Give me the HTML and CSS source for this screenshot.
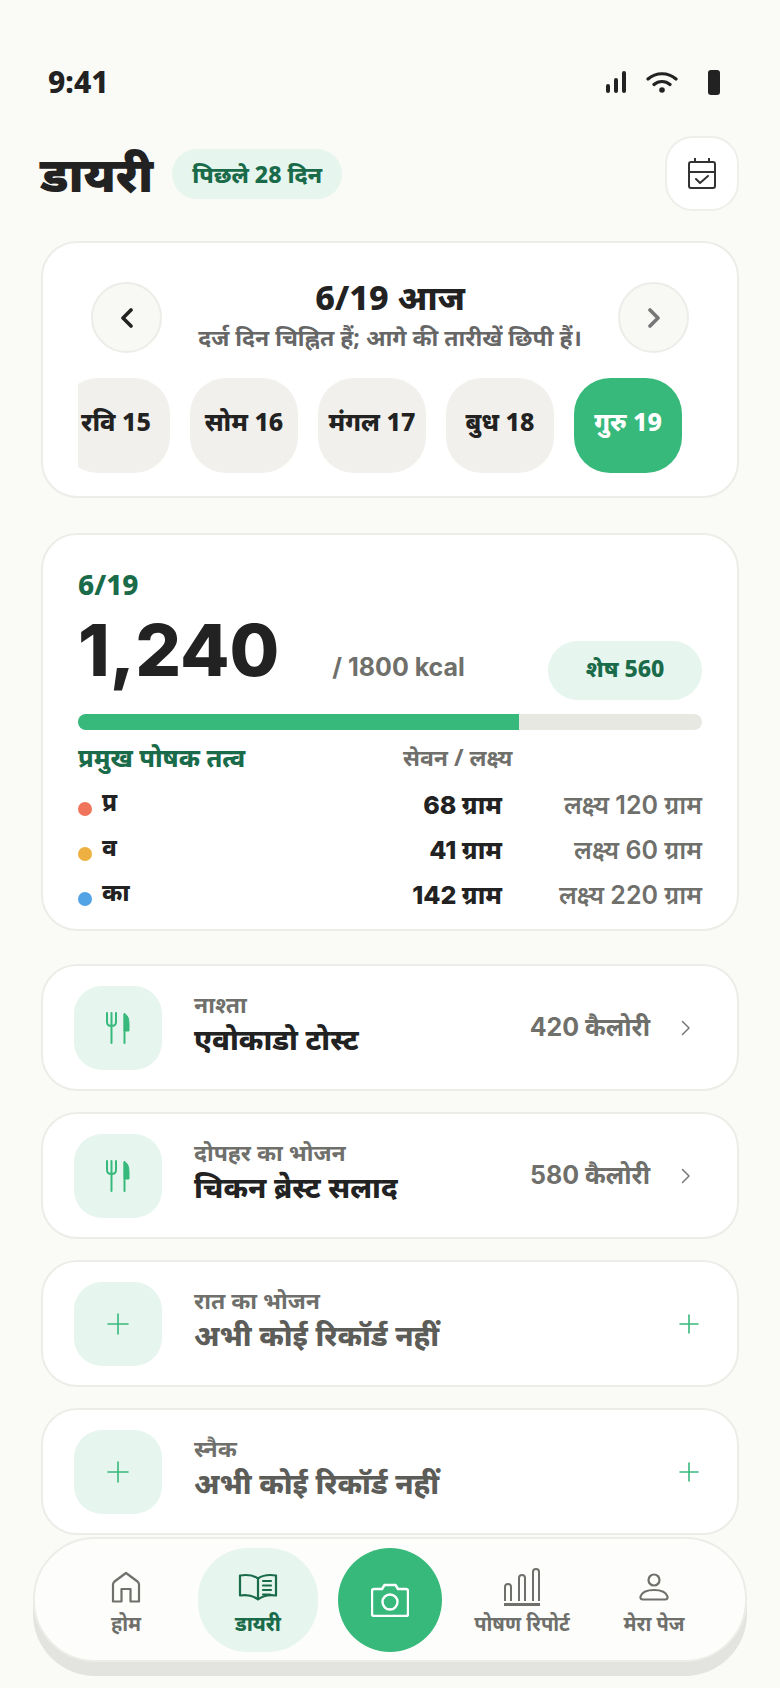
FILE: index.html
```html
<!DOCTYPE html>
<html lang="hi">
<head>
    <meta charset="UTF-8">
    <title>डायरी</title>
    <link rel="stylesheet" href="styles.css">
</head>
<body>
<div class="page">
    <div class="status">
        <span class="time">9:41</span>
        <div class="status-icons">
            <svg class="ic-signal" width="20" height="22" viewBox="0 0 20 22"><path d="M2 15v5M10 9v11M18 2v18" fill="none" stroke="#222" stroke-width="4" stroke-linecap="round"/></svg>
            <svg class="ic-wifi" width="32" height="22" viewBox="0 0 32 22"><path d="M2 8C10 1 22 1 30 8M8 13.5C12.5 9.5 19.500 9.500 24 13.500" fill="none" stroke="#222" stroke-width="3.200" stroke-linecap="round"/><circle cx="16" cy="19" r="2.800" fill="#222"/></svg>
            <div class="ic-battery"></div>
        </div>
    </div>

    <div class="header">
        <h1>डायरी</h1>
        <span class="range-pill">पिछले 28 दिन</span>
        <button class="cal-btn">
            <svg width="28" height="31" viewBox="0 0 28 31" fill="none" stroke="#333" stroke-width="2" stroke-linecap="round" stroke-linejoin="round"><rect x="1" y="4" width="26" height="26" rx="2"/><path d="M1 14H27M7 0.500V4M21 0.500V4M8 21L12 25L20 18"/></svg>
        </button>
    </div>

    <div class="card date-card">
        <div class="date-nav">
            <button class="round-btn">
                <svg width="14" height="20" viewBox="0 0 14 20"><path d="M11 2L3 10L11 18" fill="none" stroke="#222" stroke-width="3.600" stroke-linecap="round" stroke-linejoin="round"/></svg>
            </button>
            <div class="date-title">
                <div class="date-main">6/19 आज</div>
                <div class="date-sub">दर्ज दिन चिह्नित हैं; आगे की तारीखें छिपी हैं।</div>
            </div>
            <button class="round-btn">
                <svg width="14" height="20" viewBox="0 0 14 20"><path d="M3 2L11 10L3 18" fill="none" stroke="#777" stroke-width="3.600" stroke-linecap="round" stroke-linejoin="round"/></svg>
            </button>
        </div>
        <div class="days">
            <div class="day">रवि 15</div>
            <div class="day">सोम 16</div>
            <div class="day">मंगल 17</div>
            <div class="day">बुध 18</div>
            <div class="day active">गुरु 19</div>
        </div>
    </div>

    <div class="card summary">
        <div class="sum-date">6/19</div>
        <div class="sum-row">
            <span class="kcal">1,240</span>
            <span class="kcal-goal">/ 1800 kcal</span>
            <span class="left-pill">शेष 560</span>
        </div>
        <div class="bar"><div class="bar-fill" style="width: 70.7%"></div></div>
        <div class="nutri-head">
            <span class="nutri-title">प्रमुख पोषक तत्व</span>
            <span class="nutri-cols">सेवन / लक्ष्य</span>
        </div>
        <div class="nutri-row">
            <span class="dot dot-p"></span><span class="nutri-name">प्र</span>
            <span class="nutri-val">68 ग्राम</span><span class="nutri-goal">लक्ष्य 120 ग्राम</span>
        </div>
        <div class="nutri-row">
            <span class="dot dot-f"></span><span class="nutri-name">व</span>
            <span class="nutri-val">41 ग्राम</span><span class="nutri-goal">लक्ष्य 60 ग्राम</span>
        </div>
        <div class="nutri-row">
            <span class="dot dot-c"></span><span class="nutri-name">का</span>
            <span class="nutri-val">142 ग्राम</span><span class="nutri-goal">लक्ष्य 220 ग्राम</span>
        </div>
    </div>

    <div class="meals">
        <div class="card meal">
            <div class="meal-icon">
                <svg width="24" height="32" viewBox="0 0 24 32" fill="none" stroke="#38b97c" stroke-width="2" stroke-linecap="round"><path d="M1 1V10Q1 14 5.500 14Q10 14 10 10V1M5.500 1V31"/><path d="M18.500 31V2"/><path d="M18.500 2Q23 3 23 12V19H18.500Z" fill="#38b97c" stroke-width="1"/></svg>
            </div>
            <div class="meal-text">
                <div class="meal-label">नाश्ता</div>
                <div class="meal-name">एवोकाडो टोस्ट</div>
            </div>
            <span class="meal-cal">420 कैलोरी</span>
            <svg class="meal-end" width="18" height="18" viewBox="0 0 18 18"><path d="M5.500 2.500L12 9L5.500 15.500" fill="none" stroke="#777" stroke-width="1.500" stroke-linecap="round" stroke-linejoin="round"/></svg>
        </div>
        <div class="card meal">
            <div class="meal-icon">
                <svg width="24" height="32" viewBox="0 0 24 32" fill="none" stroke="#38b97c" stroke-width="2" stroke-linecap="round"><path d="M1 1V10Q1 14 5.500 14Q10 14 10 10V1M5.500 1V31"/><path d="M18.500 31V2"/><path d="M18.500 2Q23 3 23 12V19H18.500Z" fill="#38b97c" stroke-width="1"/></svg>
            </div>
            <div class="meal-text">
                <div class="meal-label">दोपहर का भोजन</div>
                <div class="meal-name">चिकन ब्रेस्ट सलाद</div>
            </div>
            <span class="meal-cal">580 कैलोरी</span>
            <svg class="meal-end" width="18" height="18" viewBox="0 0 18 18"><path d="M5.500 2.500L12 9L5.500 15.500" fill="none" stroke="#777" stroke-width="1.500" stroke-linecap="round" stroke-linejoin="round"/></svg>
        </div>
        <div class="card meal">
            <div class="meal-icon">
                <svg width="22" height="22" viewBox="0 0 22 22"><path d="M11 1V21M1 11H21" fill="none" stroke="#38b97c" stroke-width="1.600" stroke-linecap="round"/></svg>
            </div>
            <div class="meal-text">
                <div class="meal-label">रात का भोजन</div>
                <div class="meal-name empty">अभी कोई रिकॉर्ड नहीं</div>
            </div>
            <svg class="meal-end plus" width="20" height="20" viewBox="0 0 20 20"><path d="M10 1V19M1 10H19" fill="none" stroke="#38b97c" stroke-width="1.600" stroke-linecap="round"/></svg>
        </div>
        <div class="card meal">
            <div class="meal-icon">
                <svg width="22" height="22" viewBox="0 0 22 22"><path d="M11 1V21M1 11H21" fill="none" stroke="#38b97c" stroke-width="1.600" stroke-linecap="round"/></svg>
            </div>
            <div class="meal-text">
                <div class="meal-label">स्नैक</div>
                <div class="meal-name empty">अभी कोई रिकॉर्ड नहीं</div>
            </div>
            <svg class="meal-end plus" width="20" height="20" viewBox="0 0 20 20"><path d="M10 1V19M1 10H19" fill="none" stroke="#38b97c" stroke-width="1.600" stroke-linecap="round"/></svg>
        </div>
    </div>

    <nav class="tabbar">
        <div class="tab">
            <svg width="30" height="31" viewBox="0 0 30 31" fill="none" stroke="#6f6f6b" stroke-width="2.200" stroke-linejoin="round"><path d="M2 30V13Q2 11.500 3.500 10L15 1.500L26.500 10Q28 11.500 28 13V30H19.500V17.500H10.500V30Z"/></svg>
            <span>होम</span>
        </div>
        <div class="tab current">
            <svg width="40" height="27" viewBox="0 0 40 27" fill="none" stroke="#1a6b4a" stroke-width="2.200" stroke-linecap="round" stroke-linejoin="round"><path d="M20 5C15 1.500 8 1 2 2V22C8 21 15 22 20 26C25 22 32 21 38 22V2C32 1 25 1.500 20 5V26"/><path d="M25 7.500H33M25 12H33M25 16.500H33M25 21H32"/></svg>
            <span>डायरी</span>
        </div>
        <button class="camera">
            <svg width="38" height="34" viewBox="0 0 38 34" fill="none" stroke="#fff" stroke-width="2.400" stroke-linejoin="round"><path d="M3 6H11L13.500 2H24.500L27 6H35Q37 6 37 8V31Q37 33 35 33H3Q1 33 1 31V8Q1 6 3 6Z"/><circle cx="19" cy="19" r="7.500"/></svg>
        </button>
        <div class="tab">
            <svg width="36" height="38" viewBox="0 0 36 38" fill="none" stroke="#6f6f6b" stroke-width="2"><path d="M1 33V19Q1 16 4 16Q7 16 7 19V33M15 33V10Q15 7 18 7Q21 7 21 10V33M29 33V4Q29 1 32 1Q35 1 35 4V33"/><path d="M0 36.500H36" stroke-width="3"/></svg>
            <span>पोषण रिपोर्ट</span>
        </div>
        <div class="tab">
            <svg width="30" height="27" viewBox="0 0 30 27" fill="none" stroke="#6f6f6b" stroke-width="2.200" stroke-linejoin="round"><circle cx="15" cy="6.500" r="5.500"/><path d="M4 26H26Q29 26 28.500 23C27 18.500 21 16.500 15 16.500C9 16.500 3 18.500 1.500 23Q1 26 4 26Z"/></svg>
            <span>मेरा पेज</span>
        </div>
    </nav>
</div>
</body>
</html>
```

FILE: styles.css
```css
* {
    box-sizing: border-box;
}
body {
    margin: 0;
    font-family: "Noto Sans", "Noto Sans Devanagari", sans-serif;
    color: #222;
}
.page {
    position: relative;
    width: 780px;
    height: 1688px;
    overflow: hidden;
    background-color: #fafaf6;
}
button {
    padding: 0;
    font: inherit;
    cursor: pointer;
}

/* status bar */
.status {
    display: flex;
    justify-content: space-between;
    align-items: center;
    height: 36px;
    margin-top: 64px;
    padding: 0 60px 0 48px;
}
.time {
    font-size: 30px;
    font-weight: 800;
    line-height: 36px;
}
.status-icons {
    display: flex;
    align-items: center;
    gap: 20px;
}
.ic-battery {
    width: 12px;
    height: 25px;
    margin-left: 10px;
    border-radius: 3px;
    background-color: #222;
}

/* header */
.header {
    display: flex;
    align-items: center;
    height: 75px;
    margin: 36px 41px 30px 40px;
}
h1 {
    margin: 0;
    font-size: 48px;
    font-weight: 900;
    line-height: 1;
}
.range-pill {
    display: flex;
    align-items: center;
    height: 50px;
    margin-left: 19px;
    padding: 0 20px;
    border-radius: 25px;
    background-color: #e6f5ee;
    color: #1a6b4a;
    font-size: 23px;
    font-weight: 800;
    white-space: nowrap;
}
.cal-btn {
    display: flex;
    align-items: center;
    justify-content: center;
    width: 74px;
    height: 75px;
    margin-left: auto;
    border: 2px solid #eeeeea;
    border-radius: 28px;
    background-color: #fff;
}

/* cards */
.card {
    margin: 0 41px;
    border: 2px solid #ecece8;
    border-radius: 36px;
    background-color: #fff;
}
.date-card {
    height: 257px;
    padding: 39px 35px 23px;
}
.date-nav {
    display: flex;
    justify-content: space-between;
    align-items: center;
    height: 71px;
    padding: 0 13px;
}
.round-btn {
    display: flex;
    align-items: center;
    justify-content: center;
    width: 71px;
    height: 71px;
    border: 2px solid #ecece8;
    border-radius: 50%;
    background-color: #f8f8f4;
}
.date-title {
    margin-top: -8px;
    text-align: center;
    white-space: nowrap;
}
.date-main {
    font-size: 34px;
    font-weight: 800;
    line-height: 44px;
}
.date-sub {
    margin-top: 2px;
    color: #666;
    font-size: 23px;
    font-weight: 700;
    line-height: 32px;
}
.days {
    display: flex;
    justify-content: flex-end;
    gap: 20px;
    margin-top: 25px;
    padding-right: 20px;
    overflow: hidden;
}
.day {
    flex: 0 0 108px;
    height: 95px;
    border-radius: 36px;
    background-color: #f1f0ec;
    font-size: 25px;
    font-weight: 800;
    line-height: 86px;
    text-align: center;
    white-space: nowrap;
}
.day.active {
    background-color: #38b97c;
    color: #fff;
}

/* calorie summary */
.summary {
    height: 398px;
    margin-top: 35px;
    padding: 32px 35px 0;
}
.sum-date {
    color: #1a6b4a;
    font-size: 28px;
    font-weight: 800;
    line-height: 34px;
}
.sum-row {
    display: flex;
    align-items: flex-start;
    height: 98px;
    margin-top: 3px;
}
.kcal {
    margin-top: 10px;
    font-family: Inter, sans-serif;
    font-size: 72px;
    font-weight: 800;
    line-height: 72px;
}
.kcal-goal {
    margin-left: 53px;
    margin-top: 48px;
    color: #6f6f6b;
    font-family: Inter, "Noto Sans", sans-serif;
    font-size: 25px;
    font-weight: 700;
    line-height: 30px;
}
.left-pill {
    width: 154px;
    height: 59px;
    margin-left: auto;
    margin-top: 37px;
    border-radius: 30px;
    background-color: #e6f5ee;
    color: #1a6b4a;
    font-size: 23px;
    font-weight: 800;
    line-height: 55px;
    text-align: center;
}
.bar {
    height: 16px;
    margin-top: 12px;
    border-radius: 8px;
    background-color: #e8e8e3;
    overflow: hidden;
}
.bar-fill {
    height: 100%;
    background-color: #38b97c;
}
.nutri-head {
    display: flex;
    align-items: center;
    height: 30px;
    margin: 12px 0 10px;
}
.nutri-title {
    width: 325px;
    color: #1a6b4a;
    font-size: 25px;
    font-weight: 800;
    line-height: 30px;
}
.nutri-cols {
    color: #6f6f6b;
    font-size: 23px;
    font-weight: 700;
    line-height: 30px;
}
.nutri-row {
    display: flex;
    align-items: center;
    height: 45px;
    font-size: 25px;
    line-height: 34px;
}
.dot {
    width: 14px;
    height: 14px;
    margin-top: 8px;
    border-radius: 50%;
}
.dot-p {
    background-color: #f0745c;
}
.dot-f {
    background-color: #eeb040;
}
.dot-c {
    background-color: #52a3e5;
}
.nutri-name {
    width: 80px;
    margin-left: 10px;
    margin-top: -6px;
    font-size: 24px;
    font-weight: 800;
}
.nutri-val {
    width: 320px;
    font-family: Inter, "Noto Sans", sans-serif;
    font-weight: 800;
    text-align: right;
}
.nutri-goal {
    flex: 1;
    color: #6f6f6b;
    font-family: Inter, "Noto Sans", sans-serif;
    font-size: 25px;
    font-weight: 600;
    text-align: right;
}

/* meals */
.meals {
    display: flex;
    flex-direction: column;
    gap: 21px;
    margin-top: 33px;
}
.meal {
    display: flex;
    align-items: center;
    height: 127px;
    padding: 0 42px 0 31px;
}
.meal-icon {
    display: flex;
    align-items: center;
    justify-content: center;
    flex: 0 0 88px;
    height: 84px;
    border-radius: 28px;
    background-color: #e6f5ee;
}
.meal-text {
    flex: 1;
    margin-left: 32px;
    margin-top: -8px;
}
.meal-label {
    color: #6f6f6b;
    font-size: 23px;
    font-weight: 700;
    line-height: 30px;
}
.meal-name {
    font-size: 29px;
    font-weight: 800;
    line-height: 40px;
}
.meal-name.empty {
    color: #5c5c58;
}
.meal-cal {
    margin-top: -4px;
    margin-right: 27px;
    color: #6f6f6b;
    font-family: Inter, "Noto Sans", sans-serif;
    font-size: 25px;
    font-weight: 700;
}
.meal-end.plus {
    margin-right: -4px;
}

/* bottom tabs */
.tabbar {
    position: absolute;
    left: 33px;
    top: 1537px;
    display: flex;
    align-items: center;
    gap: 12px;
    width: 714px;
    height: 125px;
    padding: 0 31px;
    border: 2px solid #ecece8;
    border-radius: 62px;
    background-color: #fdfdfb;
    box-shadow: 0 14px 0 #e3e4df;
}
.tab {
    display: flex;
    flex-direction: column;
    align-items: center;
    justify-content: center;
    flex: 0 0 120px;
    height: 104px;
    padding-top: 6px;
    border-radius: 50px;
    color: #6f6f6b;
    font-size: 20px;
    font-weight: 700;
    line-height: 28px;
    white-space: nowrap;
}
.tab svg {
    height: 38px;
    margin-bottom: 4px;
}
.tab.current {
    background-color: #e6f5ee;
    color: #1a6b4a;
    font-weight: 800;
}
.camera {
    display: flex;
    align-items: center;
    justify-content: center;
    flex: 0 0 104px;
    height: 104px;
    margin: 0 8px;
    border: 0;
    border-radius: 50%;
    background-color: #38b97c;
}
```
